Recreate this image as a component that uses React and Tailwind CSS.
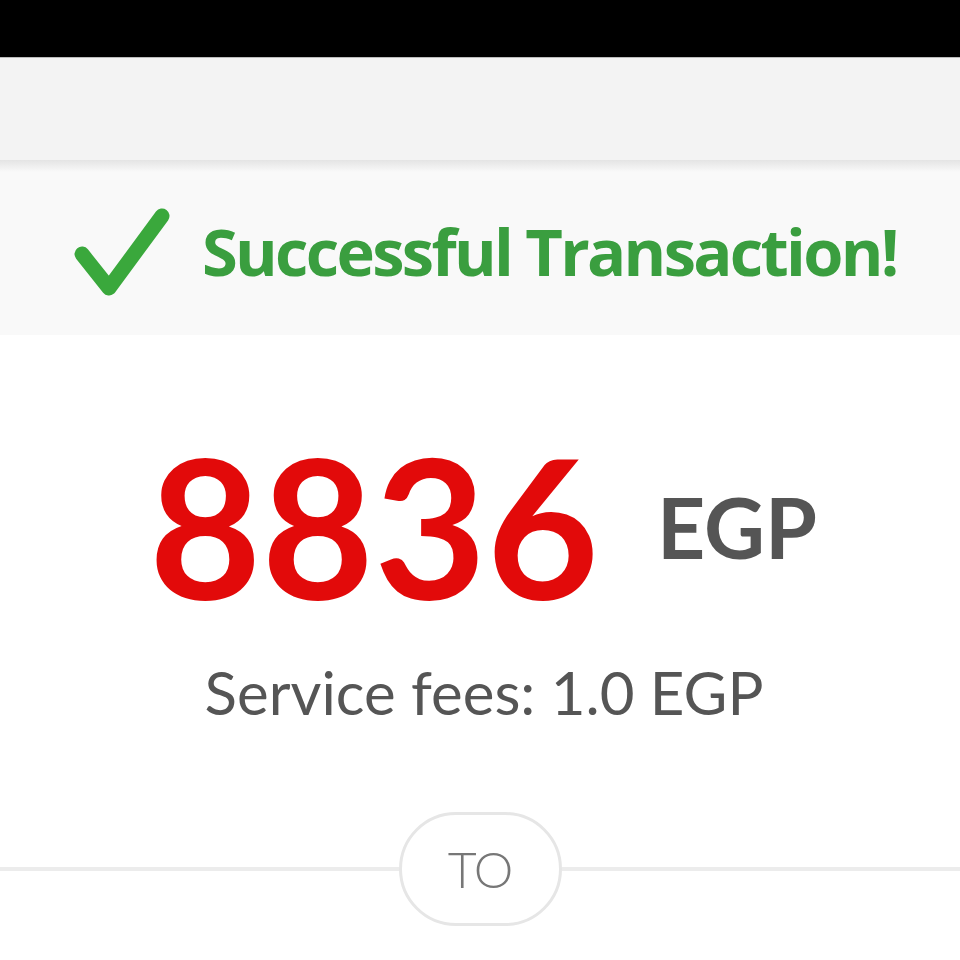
function CheckMark() {
  return (
    <svg width="100" height="100" viewBox="0 0 100 100" className="shrink-0">
      <polyline
        points="10,50 37,84 90,12"
        fill="none"
        stroke="#3aa83c"
        strokeWidth="15"
        strokeLinecap="round"
        strokeLinejoin="round"
      />
    </svg>
  );
}

export default function App() {
  return (
    <div className="w-[960px] h-[960px] overflow-hidden bg-white font-['Open_Sans',sans-serif]">
      {/* status bar */}
      <div className="h-[57px] bg-black" />

      {/* top toolbar */}
      <div className="h-[103px] bg-[#f3f3f3] border-t border-[#bbb]" />
      <div className="h-[12px] bg-gradient-to-b from-[#e4e4e4] to-[#f9f9f9]" />

      {/* success banner */}
      <div className="h-[163px] bg-[#f9f9f9] flex items-center pl-[72px] gap-[30px]">
        <CheckMark />
        <span className="text-[65px] font-bold text-[#3a9e3f] tracking-[-2.7px] leading-none pb-[4px]">
          Successful Transaction!
        </span>
      </div>

      {/* amount */}
      <div className="flex flex-col items-center pt-[92px]">
        <div className="flex items-baseline gap-[58px] pl-[6px]">
          <span className="text-[194px] font-bold text-[#e20a0a] leading-none font-['Lato',sans-serif]">
            8836
          </span>
          <span className="text-[84px] font-bold text-[#555] leading-none font-['Lato',sans-serif] relative top-[-40px]">
            EGP
          </span>
        </div>
        <div className="mt-[41px] text-[60px] text-[#555] leading-none font-['Lato',sans-serif] pl-[8px]">
          Service fees: 1.0 EGP
        </div>
      </div>

      {/* divider with TO pill */}
      <div className="mt-[90px] flex items-center">
        <div className="flex-1 h-[4px] bg-[#ececec]" />
        <div className="w-[163px] h-[114px] rounded-full border-[3px] border-[#e6e6e6] bg-white flex items-center justify-center">
          <span className="text-[50px] text-[#777] font-light leading-none font-['Lato',sans-serif] tracking-[-1px]">TO</span>
        </div>
        <div className="flex-1 h-[4px] bg-[#ececec]" />
      </div>
    </div>
  );
}
